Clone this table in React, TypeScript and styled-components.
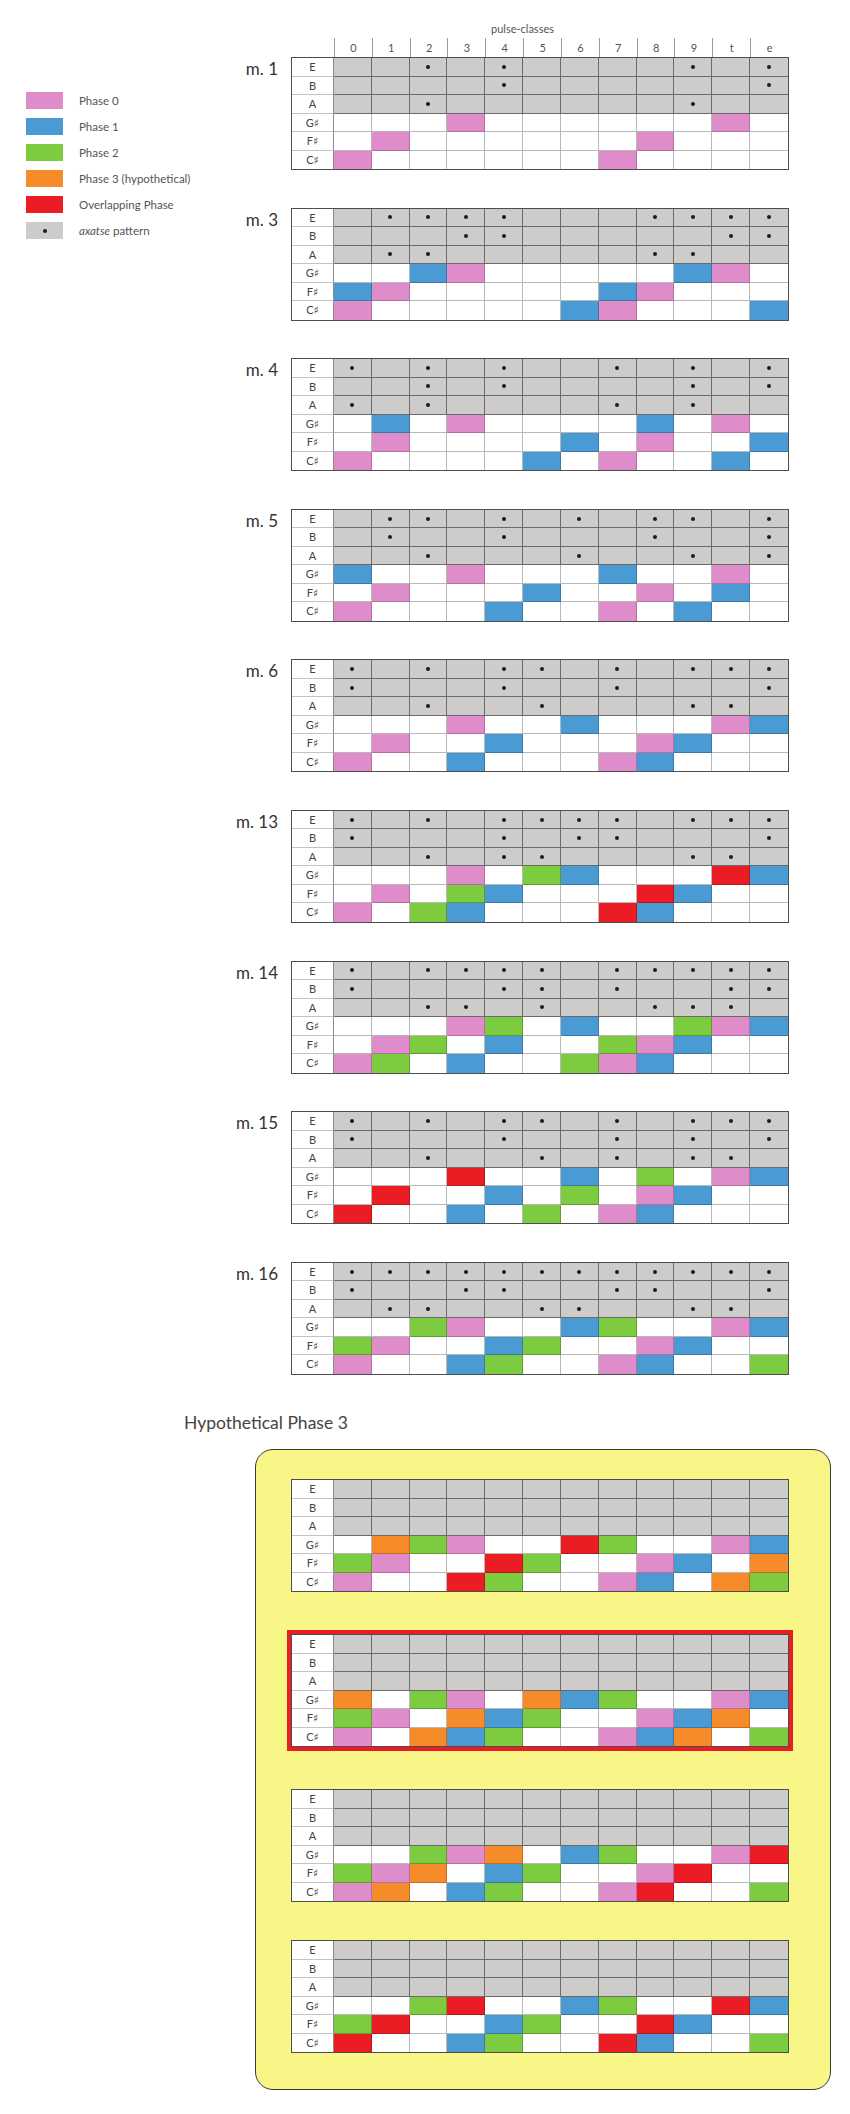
import styled, { createGlobalStyle } from "styled-components";

const GlobalStyle = createGlobalStyle`
  body {
    margin: 0;
    background: #ffffff;
    font-family: Lato, "Open Sans", "DejaVu Sans", sans-serif;
    color: #444;
  }
`;

type Fill = "." | "p" | "b" | "g" | "o" | "r" | "x";

const FILLS: Record<Fill, { bg: string; line: string }> = {
  ".": { bg: "#ffffff", line: "#b8b8b8" },
  x: { bg: "#cdcccb", line: "#6a6a6a" },
  p: { bg: "#df8ccb", line: "#b46ea3" },
  b: { bg: "#4a9ad4", line: "#3a78a8" },
  g: { bg: "#7dcb3e", line: "#5e9c2e" },
  o: { bg: "#f68c29", line: "#c46d1e" },
  r: { bg: "#ec1c24", line: "#b5151b" },
};

type Measure = {
  label?: string;
  dots: number[][];
  pitched: string[];
  highlight?: boolean;
};

const NO_DOTS = [[], [], []];

const measures: Measure[] = [
  {
    label: "m. 1",
    dots: [[2, 4, 9, 11], [4, 11], [2, 9]],
    pitched: ["...p......p.", ".p......p...", "p......p...."],
  },
  {
    label: "m. 3",
    dots: [[1, 2, 3, 4, 8, 9, 10, 11], [3, 4, 10, 11], [1, 2, 8, 9]],
    pitched: ["..bp.....bp.", "bp.....bp...", "p.....bp...b"],
  },
  {
    label: "m. 4",
    dots: [[0, 2, 4, 7, 9, 11], [2, 4, 9, 11], [0, 2, 7, 9]],
    pitched: [".b.p....b.p.", ".p....b.p..b", "p....b.p..b."],
  },
  {
    label: "m. 5",
    dots: [[1, 2, 4, 6, 8, 9, 11], [1, 4, 8, 11], [2, 6, 9, 11]],
    pitched: ["b..p...b..p.", ".p...b..p.b.", "p...b..p.b.."],
  },
  {
    label: "m. 6",
    dots: [[0, 2, 4, 5, 7, 9, 10, 11], [0, 4, 7, 11], [2, 5, 9, 10]],
    pitched: ["...p..b...pb", ".p..b...pb..", "p..b...pb..."],
  },
  {
    label: "m. 13",
    dots: [[0, 2, 4, 5, 6, 7, 9, 10, 11], [0, 4, 6, 7, 11], [2, 4, 5, 9, 10]],
    pitched: ["...p.gb...rb", ".p.gb...rb..", "p.gb...rb..."],
  },
  {
    label: "m. 14",
    dots: [[0, 2, 3, 4, 5, 7, 8, 9, 10, 11], [0, 4, 5, 7, 10, 11], [2, 3, 5, 8, 9, 10]],
    pitched: ["...pg.b..gpb", ".pg.b..gpb..", "pg.b..gpb..."],
  },
  {
    label: "m. 15",
    dots: [[0, 2, 4, 5, 7, 9, 10, 11], [0, 4, 7, 9, 11], [2, 5, 7, 9, 10]],
    pitched: ["...r..b.g.pb", ".r..b.g.pb..", "r..b.g.pb..."],
  },
  {
    label: "m. 16",
    dots: [[0, 1, 2, 3, 4, 5, 6, 7, 8, 9, 10, 11], [0, 3, 4, 7, 8, 11], [1, 2, 5, 6, 9, 10]],
    pitched: ["..gp..bg..pb", "gp..bg..pb..", "p..bg..pb..g"],
  },
];

const hypothetical: Measure[] = [
  { dots: NO_DOTS, pitched: [".ogp..rg..pb", "gp..rg..pb.o", "p..rg..pb.og"] },
  { dots: NO_DOTS, pitched: ["o.gp.obg..pb", "gp.obg..pbo.", "p.obg..pbo.g"], highlight: true },
  { dots: NO_DOTS, pitched: ["..gpo.bg..pr", "gpo.bg..pr..", "po.bg..pr..g"] },
  { dots: NO_DOTS, pitched: ["..gr..bg..rb", "gr..bg..rb..", "r..bg..rb..g"] },
];

const pitches = ["E", "B", "A", "G\u266F", "F\u266F", "C\u266F"];
const pulses = ["0", "1", "2", "3", "4", "5", "6", "7", "8", "9", "t", "e"];

const legend: { fill: Fill; text: string; dot?: boolean }[] = [
  { fill: "p", text: "Phase 0" },
  { fill: "b", text: "Phase 1" },
  { fill: "g", text: "Phase 2" },
  { fill: "o", text: "Phase 3 (hypothetical)" },
  { fill: "r", text: "Overlapping Phase" },
  { fill: "x", text: "pattern", dot: true },
];

const Page = styled.div`
  width: 850px;
  padding-bottom: 20px;
`;

const Top = styled.div`
  display: flex;
`;

const Legend = styled.div`
  width: 230px;
  box-sizing: border-box;
  padding: 92px 0 0 26px;
  display: flex;
  flex-direction: column;
  gap: 9px;
`;

const LegendItem = styled.div`
  display: flex;
  align-items: center;
  height: 17px;
`;

const Swatch = styled.div<{ $fill: Fill }>`
  width: 37px;
  height: 17px;
  background: ${(p) => FILLS[p.$fill].bg};
  display: flex;
  align-items: center;
  justify-content: center;
  flex-shrink: 0;
`;

const LegendText = styled.span`
  margin-left: 16px;
  font-size: 11.5px;
  color: #555;
  white-space: nowrap;

  em {
    font-style: italic;
  }
`;

const Charts = styled.div`
  padding-top: 22px;
`;

const Header = styled.div`
  margin-left: 61px;
  width: 498px;
`;

const HeaderTitle = styled.div`
  margin-left: 200px;
  font-size: 11px;
  line-height: 13px;
  color: #555;
`;

const NumberRow = styled.div`
  margin-top: 3px;
  padding: 0 1px;
  display: grid;
  grid-template-columns: 42px repeat(12, 1fr);
  height: 19px;
`;

const Number = styled.div`
  border-left: 1px solid #9a9a9a;
  font-size: 11px;
  line-height: 19px;
  text-align: center;
  color: #555;
`;

const MeasureList = styled.div`
  display: flex;
  flex-direction: column;
  gap: 37.6px;
`;

const MeasureRow = styled.div`
  display: flex;
  align-items: flex-start;
`;

const MeasureLabel = styled.div`
  width: 48px;
  margin-right: 13px;
  padding-top: 2px;
  text-align: right;
  font-size: 17px;
  line-height: 20px;
  color: #333;
  white-space: nowrap;
`;

const Grid = styled.div`
  width: 498px;
  box-sizing: border-box;
  border: 1px solid #4e4e4e;
  display: grid;
  grid-template-columns: 42px repeat(12, 1fr);
  grid-auto-rows: 18.5px;
  background: #ffffff;
`;

const PitchCell = styled.div<{ $last: boolean }>`
  border-right: 1px solid #8a8a8a;
  border-bottom: ${(p) => (p.$last ? "none" : "1px solid #c4c4c4")};
  font-size: 11px;
  line-height: 18px;
  text-align: center;
  color: #444;
`;

const Cell = styled.div<{ $fill: Fill; $last: boolean; $end: boolean }>`
  background: ${(p) => FILLS[p.$fill].bg};
  border-right: ${(p) => (p.$end ? "none" : `1px solid ${FILLS[p.$fill].line}`)};
  border-bottom: ${(p) => (p.$last ? "none" : `1px solid ${FILLS[p.$fill].line}`)};
  display: flex;
  align-items: center;
  justify-content: center;
`;

const Dot = styled.span`
  width: 4px;
  height: 4px;
  border-radius: 50%;
  background: #1c1c1c;
`;

const Hypo = styled.div`
  margin: 38px 0 0 184px;
`;

const HypoTitle = styled.div`
  font-size: 17.5px;
  line-height: 20px;
  color: #444;
`;

const YellowBox = styled.div`
  margin: 16px 0 0 71px;
  width: 576px;
  box-sizing: border-box;
  border: 1.5px solid #3a3a3a;
  border-radius: 18px;
  background: #f8f686;
  padding: 29.5px 38px 36px 35px;
  display: flex;
  flex-direction: column;
  align-items: flex-start;
  gap: 38px;
`;

const Highlight = styled.div`
  margin-left: -4px;
  border: 4px solid #ec1c24;
`;

const PulseTable = ({ measure }: { measure: Measure }) => (
  <Grid>
    {pitches.map((pitch, row) => {
      const last = row === pitches.length - 1;
      return [
        <PitchCell key={`l${row}`} $last={last}>
          {pitch}
        </PitchCell>,
        ...pulses.map((_, col) => {
          const fill: Fill = row < 3 ? "x" : (measure.pitched[row - 3][col] as Fill);
          const dotted = row < 3 && measure.dots[row].includes(col);
          return (
            <Cell key={`${row}-${col}`} $fill={fill} $last={last} $end={col === 11}>
              {dotted && <Dot />}
            </Cell>
          );
        }),
      ];
    })}
  </Grid>
);

export default function App() {
  return (
    <Page>
      <GlobalStyle />
      <Top>
        <Legend>
          {legend.map((item) => (
            <LegendItem key={item.text}>
              <Swatch $fill={item.fill}>{item.dot && <Dot />}</Swatch>
              <LegendText>
                {item.dot ? (
                  <>
                    <em>axatse</em> {item.text}
                  </>
                ) : (
                  item.text
                )}
              </LegendText>
            </LegendItem>
          ))}
        </Legend>

        <Charts>
          <Header>
            <HeaderTitle>pulse-classes</HeaderTitle>
            <NumberRow>
              <div />
              {pulses.map((p) => (
                <Number key={p}>{p}</Number>
              ))}
            </NumberRow>
          </Header>

          <MeasureList>
            {measures.map((m) => (
              <MeasureRow key={m.label}>
                <MeasureLabel>{m.label}</MeasureLabel>
                <PulseTable measure={m} />
              </MeasureRow>
            ))}
          </MeasureList>
        </Charts>
      </Top>

      <Hypo>
        <HypoTitle>Hypothetical Phase 3</HypoTitle>
        <YellowBox>
          {hypothetical.map((m, i) =>
            m.highlight ? (
              <Highlight key={i}>
                <PulseTable measure={m} />
              </Highlight>
            ) : (
              <PulseTable key={i} measure={m} />
            )
          )}
        </YellowBox>
      </Hypo>
    </Page>
  );
}
